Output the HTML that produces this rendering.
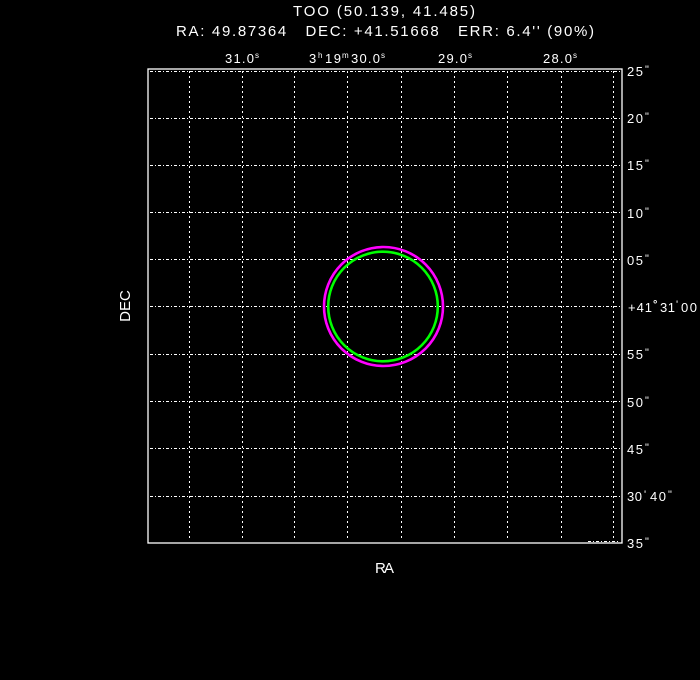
<!DOCTYPE html>
<html><head><style>
html,body{margin:0;padding:0;background:#000;width:700px;height:680px;overflow:hidden}
svg{display:block}
text{font-family:"Liberation Sans","DejaVu Sans",sans-serif;fill:#fff;white-space:pre}
</style></head><body>
<svg width="700" height="680" viewBox="0 0 700 680" xmlns="http://www.w3.org/2000/svg" xml:space="preserve">
<rect width="700" height="680" fill="#000"/>
<text x="293" y="16" font-size="15" textLength="182" lengthAdjust="spacing">TOO (50.139, 41.485)</text>
<text x="176" y="36" font-size="15" textLength="418" lengthAdjust="spacing">RA: 49.87364   DEC: +41.51668   ERR: 6.4'' (90%)</text>
<g font-size="13">
<text x="225" y="63" textLength="29">31.0</text><text x="255" y="58" font-size="8">s</text>
<text x="309" y="63">3</text><text x="318" y="58" font-size="8">h</text><text x="325" y="63" textLength="16">19</text><text x="342" y="58" font-size="8">m</text><text x="351" y="63" textLength="29">30.0</text><text x="381" y="58" font-size="8">s</text>
<text x="438" y="63" textLength="29">29.0</text><text x="468" y="58" font-size="8">s</text>
<text x="543" y="63" textLength="29">28.0</text><text x="573" y="58" font-size="8">s</text>
</g>
<g stroke="#fff" stroke-width="1" stroke-dasharray="2,3" fill="none">
<line x1="189.5" y1="71" x2="189.5" y2="540"/>
<line x1="242.5" y1="71" x2="242.5" y2="540"/>
<line x1="294.5" y1="71" x2="294.5" y2="540"/>
<line x1="347.5" y1="71" x2="347.5" y2="540"/>
<line x1="401.5" y1="71" x2="401.5" y2="540"/>
<line x1="454.5" y1="71" x2="454.5" y2="540"/>
<line x1="507.5" y1="71" x2="507.5" y2="540"/>
<line x1="561.5" y1="71" x2="561.5" y2="540"/>
<line x1="613.5" y1="71" x2="613.5" y2="540"/>
</g>
<g stroke="#fff" stroke-width="1" stroke-dasharray="3,2,1,2" fill="none">
<line x1="150" y1="71.5" x2="620" y2="71.5"/>
<line x1="150" y1="118.5" x2="620" y2="118.5"/>
<line x1="150" y1="165.5" x2="620" y2="165.5"/>
<line x1="150" y1="212.5" x2="620" y2="212.5"/>
<line x1="150" y1="259.5" x2="620" y2="259.5"/>
<line x1="150" y1="306.5" x2="620" y2="306.5"/>
<line x1="150" y1="354.5" x2="620" y2="354.5"/>
<line x1="150" y1="401.5" x2="620" y2="401.5"/>
<line x1="150" y1="448.5" x2="620" y2="448.5"/>
<line x1="150" y1="496.5" x2="620" y2="496.5"/>
<line x1="588" y1="541.5" x2="620" y2="541.5"/>
</g>
<rect x="148" y="69" width="474" height="474" fill="none" stroke="#fff" stroke-width="1.3"/>
<circle cx="383.5" cy="306.5" r="59.5" fill="none" stroke="#ff00ff" stroke-width="2.6"/>
<circle cx="383" cy="306.5" r="54.8" fill="none" stroke="#00ff00" stroke-width="2.6"/>
<g font-size="13">
<text x="627" y="76" textLength="16">25</text><text x="645" y="73" font-size="11">"</text>
<text x="627" y="123" textLength="16">20</text><text x="645" y="120" font-size="11">"</text>
<text x="627" y="170" textLength="16">15</text><text x="645" y="167" font-size="11">"</text>
<text x="627" y="218" textLength="16">10</text><text x="645" y="215" font-size="11">"</text>
<text x="627" y="265" textLength="16">05</text><text x="645" y="262" font-size="11">"</text>
<text x="628" y="312" textLength="24">+41</text><text x="653" y="308" font-size="11" font-weight="bold">°</text><text x="660" y="312" textLength="15">31</text><text x="676" y="308" font-size="11">'</text><text x="681" y="312" textLength="16">00</text>
<text x="627" y="359" textLength="16">55</text><text x="645" y="356" font-size="11">"</text>
<text x="627" y="407" textLength="16">50</text><text x="645" y="404" font-size="11">"</text>
<text x="627" y="454" textLength="16">45</text><text x="645" y="451" font-size="11">"</text>
<text x="627" y="501" textLength="15">30</text><text x="644" y="498" font-size="11">'</text><text x="650" y="501" textLength="16">40</text><text x="668" y="498" font-size="11">"</text>
<text x="627" y="548" textLength="16">35</text><text x="645" y="545" font-size="11">"</text>
</g>
<text x="375" y="573" font-size="15" textLength="19">RA</text>
<text transform="translate(130,306) rotate(-90)" font-size="15" text-anchor="middle">DEC</text>
</svg>
</body></html>
